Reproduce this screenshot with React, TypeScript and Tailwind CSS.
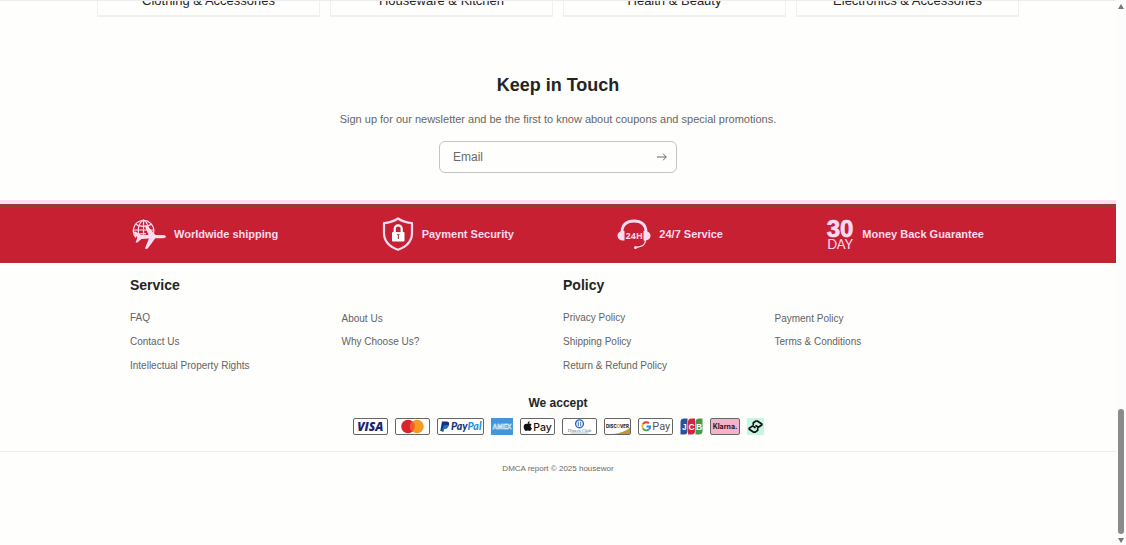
import React from "react";

const categories = [
  "Clothing & Accessories",
  "Houseware & Kitchen",
  "Health & Beauty",
  "Electronics & Accessories",
];

function PlaneGlobe() {
  return (
    <svg viewBox="0 0 34 30" className="h-[30px] w-[34px]" fill="none" aria-hidden="true">
      <g stroke="#ffdcf0" strokeWidth="1.2">
        <path d="M21.500 14A10.200 10.200 0 1 0 4 18.500" />
        <path d="M11.500 1v16M1.500 11h20M3.500 5.200c4.500 2.800 11.500 2.800 16 0M3 16.500c3-1.700 7-2.300 11-1.800" />
        <path d="M7.500 19C5 13 6 4 11.500 1c4 2 6 8 5 13" />
      </g>
      <path
        d="M34 17.600c0 .9-1.600 1.600-3.200 1.600h-7.500l-7.800 10.500h-2.600l4-10.300-7.500.6-4 3.500H3.600l1.800-5L.8 12.500h2.400l5.500 3.300 7.800.1L12.700 6.500h2.400l8.400 9.400 7.100.1c1.900 0 3.400.7 3.400 1.600z"
        fill="#ffdcf0"
      />
    </svg>
  );
}

function ShieldLock() {
  return (
    <svg viewBox="0 0 32 34" className="h-[34px] w-8" fill="none" aria-hidden="true">
      <path
        d="M16 1.500C11.500 4.500 7 5.800 2 6v10c0 8 5 13.500 14 16.800 9-3.300 14-8.800 14-16.800V6c-5-.2-9.500-1.500-14-4.500z"
        stroke="#ffdcf0"
        strokeWidth="2.200"
        strokeLinejoin="round"
      />
      <rect x="10" y="15" width="12.500" height="9.500" rx="1" fill="#fff" />
      <path d="M12.700 15v-3.200a3.500 3.500 0 0 1 7 0V15" stroke="#fff" strokeWidth="2.200" />
      <path d="M15 17.500h2.500M16.400 17.500v4.500" stroke="#a55" strokeWidth="1.200" />
    </svg>
  );
}

function Headset() {
  return (
    <svg viewBox="0 0 34 30" className="h-[30px] w-[34px]" fill="none" aria-hidden="true">
      <path d="M5 13C5 5.500 10 2 17 2s12 3.500 12 11" stroke="#ffdcf0" strokeWidth="2.800" />
      <path d="M7.500 12v9.500C3 21.800.5 19.500.5 16.700S3 11.800 7.500 12zM26.500 12v9.500c4.500.3 7-2 7-4.800S31 11.800 26.500 12z" fill="#ffdcf0" />
      <path d="M28.500 21c0 5-3 6.500-10 7.500" stroke="#ffdcf0" strokeWidth="1.300" />
      <circle cx="18.500" cy="28.400" r="1.500" fill="#ffdcf0" />
      <text x="17.200" y="20" textAnchor="middle" fontSize="9" fontWeight="700" fill="#ffdcf0" fontFamily="'Noto Sans', sans-serif">
        24H
      </text>
    </svg>
  );
}

function ThirtyDay() {
  return (
    <svg viewBox="0 0 28 32" className="h-8 w-7 overflow-visible" aria-hidden="true">
      <text x="14" y="18.500" textAnchor="middle" fontSize="24" fontWeight="700" fill="#ffdcf0" stroke="#ffdcf0" strokeWidth=".7" fontFamily="'Liberation Sans', sans-serif">
        30
      </text>
      <text x="14" y="30.500" textAnchor="middle" fontSize="13" fontWeight="400" fill="#ffdcf0" fontFamily="Lato, sans-serif">
        DAY
      </text>
    </svg>
  );
}

const perks = [
  { label: "Worldwide shipping", icon: <PlaneGlobe /> },
  { label: "Payment Security", icon: <ShieldLock /> },
  { label: "24/7 Service", icon: <Headset /> },
  { label: "Money Back Guarantee", icon: <ThirtyDay /> },
];

const menus = [
  {
    title: "Service",
    first: ["FAQ", "Contact Us", "Intellectual Property Rights"],
    second: ["About Us", "Why Choose Us?"],
  },
  {
    title: "Policy",
    first: ["Privacy Policy", "Shipping Policy", "Return & Refund Policy"],
    second: ["Payment Policy", "Terms & Conditions"],
  },
];

function Badge({ name, width, children }: { name: string; width: number; children: React.ReactNode }) {
  return (
    <li>
      <svg width={width} height="17" viewBox={`0 0 ${width} 17`} role="img" aria-label={name} className="block">
        {children}
      </svg>
    </li>
  );
}

function Frame({ width, fill = "#fff" }: { width: number; fill?: string }) {
  return <rect x=".5" y=".5" width={width - 1} height="16" rx="1.500" fill={fill} stroke="#666" />;
}

function Payments() {
  return (
    <ul className="mt-[7px] flex flex-wrap items-center justify-center gap-[7px]">
      <Badge name="Visa" width={35}>
        <Frame width={35} />
        <text x="17.300" y="12.800" textAnchor="middle" fontSize="12" fontWeight="800" fontStyle="italic" fill="#1c2470" fontFamily="'Open Sans', sans-serif">
          VISA
        </text>
      </Badge>
      <Badge name="Mastercard" width={35}>
        <Frame width={35} />
        <circle cx="13" cy="8.500" r="6.800" fill="#d8252f" />
        <circle cx="22" cy="8.500" r="6.800" fill="#f59a23" />
        <path d="M17.500 3.400a6.800 6.800 0 0 1 0 10.200 6.800 6.800 0 0 1 0-10.200z" fill="#ee5a2a" />
      </Badge>
      <Badge name="PayPal" width={47}>
        <Frame width={47} />
        <path d="M5 3.500h4.500c2 0 3 1.200 2.600 3-.4 2-1.800 3-4 3H6.600L6 13H3.300z" fill="#16317d" />
        <path d="M6.800 7h4.600c.3 2.300-1 4-3.500 4H7.200l-.6 2.800H4.500z" fill="#2470b8" />
        <text x="14" y="12" fontSize="10.500" fontWeight="900" fontStyle="italic" fill="#1c2f7c" fontFamily="Lato, sans-serif">
          Pay<tspan fill="#2b8fd6">Pal</tspan>
        </text>
      </Badge>
      <Badge name="American Express" width={22}>
        <rect width="22" height="17" fill="#4596d8" />
        <text x="11" y="10.800" textAnchor="middle" fontSize="6.500" fontWeight="700" fill="#4596d8" stroke="#e5fbff" strokeWidth=".5" fontFamily="'Liberation Sans', sans-serif">
          AMEX
        </text>
      </Badge>
      <Badge name="Apple Pay" width={35}>
        <Frame width={35} />
        <path d="M9.600 3.200c.1 1.300-.9 2.400-2.100 2.400-.1-1.200 1-2.300 2.100-2.400zM11.600 6.800c-1.400.9-1.200 2.900.3 3.500-.5 1.400-1.400 2.700-2.300 2.700-.7 0-.9-.4-1.700-.4s-1.100.4-1.700.4c-1.300 0-2.600-2.600-2.500-4.500 0-2.500 2.200-3.400 3.800-2.500 1.300-.7 3.100-.6 4.100.8z" fill="#111" />
        <text x="13.300" y="12.500" fontSize="10.500" fontWeight="500" fill="#111" fontFamily="Inter, sans-serif">
          Pay
        </text>
      </Badge>
      <Badge name="Diners Club" width={35}>
        <Frame width={35} />
        <circle cx="17.500" cy="5.800" r="3.900" fill="#fff" stroke="#2a63b4" strokeWidth="1.400" />
        <path d="M16.300 3.600v4.400M18.700 3.600v4.400" stroke="#2a63b4" strokeWidth=".9" />
        <text x="17.500" y="13.500" textAnchor="middle" fontSize="4.800" fill="#4a6c80" fontFamily="'Liberation Serif', serif">
          Diners Club
        </text>
        <path d="M8.500 15h18" stroke="#7ea6b2" strokeWidth=".7" />
      </Badge>
      <Badge name="Discover" width={27}>
        <Frame width={27} />
        <path d="M26 9.500V16H9c7.500-.8 13-3 17-6.500z" fill="#c8962c" />
        <text x="13.500" y="9.800" textAnchor="middle" fontSize="4.400" fontWeight="800" fill="#33272a" fontFamily="Inter, sans-serif">
          DISC<tspan fill="#d99624">O</tspan>VER
        </text>
      </Badge>
      <Badge name="Google Pay" width={35}>
        <Frame width={35} />
        <g fill="none" strokeWidth="1.900">
          <path d="M11 5.200A4 4 0 0 0 4.900 6.300" stroke="#e04438" />
          <path d="M4.900 6.300a4 4 0 0 0 0 4.200" stroke="#efb51c" />
          <path d="M4.900 10.500a4 4 0 0 0 6 .9" stroke="#3aa757" />
          <path d="M10.900 11.400a4 4 0 0 0 1.300-2.900H8.500" stroke="#3f7de0" />
        </g>
        <text x="14.300" y="12.300" fontSize="11" fill="#555" fontFamily="Roboto, sans-serif">
          Pay
        </text>
      </Badge>
      <Badge name="JCB" width={23}>
        <path d="M3.500.5h4V13A3.500 3.500 0 0 1 4 16.500H.5V4a3.500 3.500 0 0 1 3-3.500z" fill="#2b4f9e" />
        <path d="M11.500.5H15V13a3.500 3.500 0 0 1-3.500 3.500H8V4A3.500 3.500 0 0 1 11.500.5z" fill="#cf2544" />
        <path d="M19 .5h3.500V13a3.500 3.500 0 0 1-3.500 3.500h-3.500V4A3.500 3.500 0 0 1 19 .5z" fill="#459b45" />
        <g fontSize="8.500" fontWeight="700" fill="#fff" textAnchor="middle" fontFamily="'Liberation Sans', sans-serif">
          <text x="4.300" y="11.500">J</text>
          <text x="11.500" y="11.500">C</text>
          <text x="19" y="11.500">B</text>
        </g>
      </Badge>
      <Badge name="Klarna" width={30}>
        <Frame width={30} fill="#f4b3c8" />
        <text x="15" y="11.200" textAnchor="middle" fontSize="7" fontWeight="700" fill="#2c1420" fontFamily="Inter, sans-serif">
          Klarna.
        </text>
      </Badge>
      <Badge name="Afterpay" width={17}>
        <rect width="17" height="17" fill="#c6f5e4" />
        <g fill="none" stroke="#111" strokeWidth="1.700" strokeLinejoin="round" strokeLinecap="round">
          <path d="M6.300 6.500V4.800L9 3h1.300L14.800 6v1L11.300 9.300 9 7.800" />
          <path d="M10.700 10.500v1.900L8 14.200H6.700L2.200 11.200v-1L5.700 7.900 8 9.500" />
        </g>
      </Badge>
    </ul>
  );
}

function Scrollbar() {
  return (
    <div className="flex w-[10px] shrink-0 flex-col items-center justify-between bg-[#fcfcfc] pt-1 pb-[2px]" aria-hidden="true">
      <svg viewBox="0 0 6 5" className="h-[5px] w-1.5">
        <path d="M3 0l3 5H0z" fill="#777" />
      </svg>
      <div className="flex flex-col items-center gap-1">
        <div className="h-[125px] w-1.5 rounded-full bg-[#8b8b8b]" />
        <svg viewBox="0 0 6 5" className="h-[5px] w-1.5">
          <path d="M3 5l3-5H0z" fill="#777" />
        </svg>
      </div>
    </div>
  );
}

export default function App() {
  return (
    <div className="flex min-h-screen bg-[#fefefc] font-['Liberation_Sans',Arial,sans-serif] text-[#242424]">
      <div className="min-w-0 flex-1">
        <section className="flex h-[17px] flex-col justify-end overflow-hidden border-t border-[#ededed] px-[97px]">
          <ul className="grid shrink-0 grid-cols-4 gap-[10px]">
            {categories.map((name) => (
              <li key={name} className="border-x border-b-2 border-[#f0f0ee] pb-1.5 text-center text-[13px] leading-4">
                <a href="#">{name}</a>
              </li>
            ))}
          </ul>
        </section>

        <section className="flex flex-col items-center pt-[56px] pb-[27px]">
          <h2 className="text-[18px] leading-6 font-bold">Keep in Touch</h2>
          <p className="mt-3 text-[11px] leading-5 text-[#666]">
            Sign up for our newsletter and be the first to know about coupons and special promotions.
          </p>
          <form
            className="mt-3 flex h-8 w-[238px] items-center rounded-md border border-[#c4c4c4] pr-[9px] pl-[13px]"
            onSubmit={(e) => e.preventDefault()}
          >
            <input
              type="email"
              aria-label="Email"
              placeholder="Email"
              className="min-w-0 flex-1 bg-transparent text-[12px] outline-none placeholder:text-[#6a6a6a]"
            />
            <button type="submit" aria-label="Subscribe">
              <svg viewBox="0 0 10 8" className="h-2 w-[10px]" fill="none" stroke="#555" strokeWidth=".9">
                <path d="M0 4h9.200M6 .7 9.300 4 6 7.300" />
              </svg>
            </button>
          </form>
        </section>

        <section className="border-t-4 border-[#fddcf5]">
          <ul className="flex h-[59px] items-center justify-between border-t-4 border-b-[3px] border-t-[#963c35] border-b-[#bb2631] bg-[#c82033] px-[132px]">
            {perks.map((perk) => (
              <li key={perk.label} className="flex items-center gap-2 text-[11px] font-bold text-[#ffdcf0]">
                {perk.icon}
                {perk.label}
              </li>
            ))}
          </ul>
        </section>

        <footer>
          <div className="grid grid-cols-2 gap-[10px] px-[130px] pt-3">
            {menus.map((menu) => (
              <nav key={menu.title} aria-label={menu.title}>
                <h3 className="text-[14px] leading-5 font-bold">{menu.title}</h3>
                <div className="mt-[17px] grid grid-cols-2 text-[10px] leading-3 text-[#636363]">
                  <ul className="flex flex-col gap-3">
                    {menu.first.map((item) => (
                      <li key={item}>
                        <a href="#">{item}</a>
                      </li>
                    ))}
                  </ul>
                  <ul className="flex flex-col gap-[11px] pt-px">
                    {menu.second.map((item) => (
                      <li key={item}>
                        <a href="#">{item}</a>
                      </li>
                    ))}
                  </ul>
                </div>
              </nav>
            ))}
          </div>

          <div className="mt-[23px] pb-4">
            <h3 className="text-center text-[12px] leading-4 font-bold">We accept</h3>
            <Payments />
          </div>

          <p className="border-t border-[#efefed] pt-3 text-center text-[8px] leading-[10px] text-[#6a6a6a]">
            DMCA report © 2025 housewor
          </p>
        </footer>
      </div>
      <Scrollbar />
    </div>
  );
}
